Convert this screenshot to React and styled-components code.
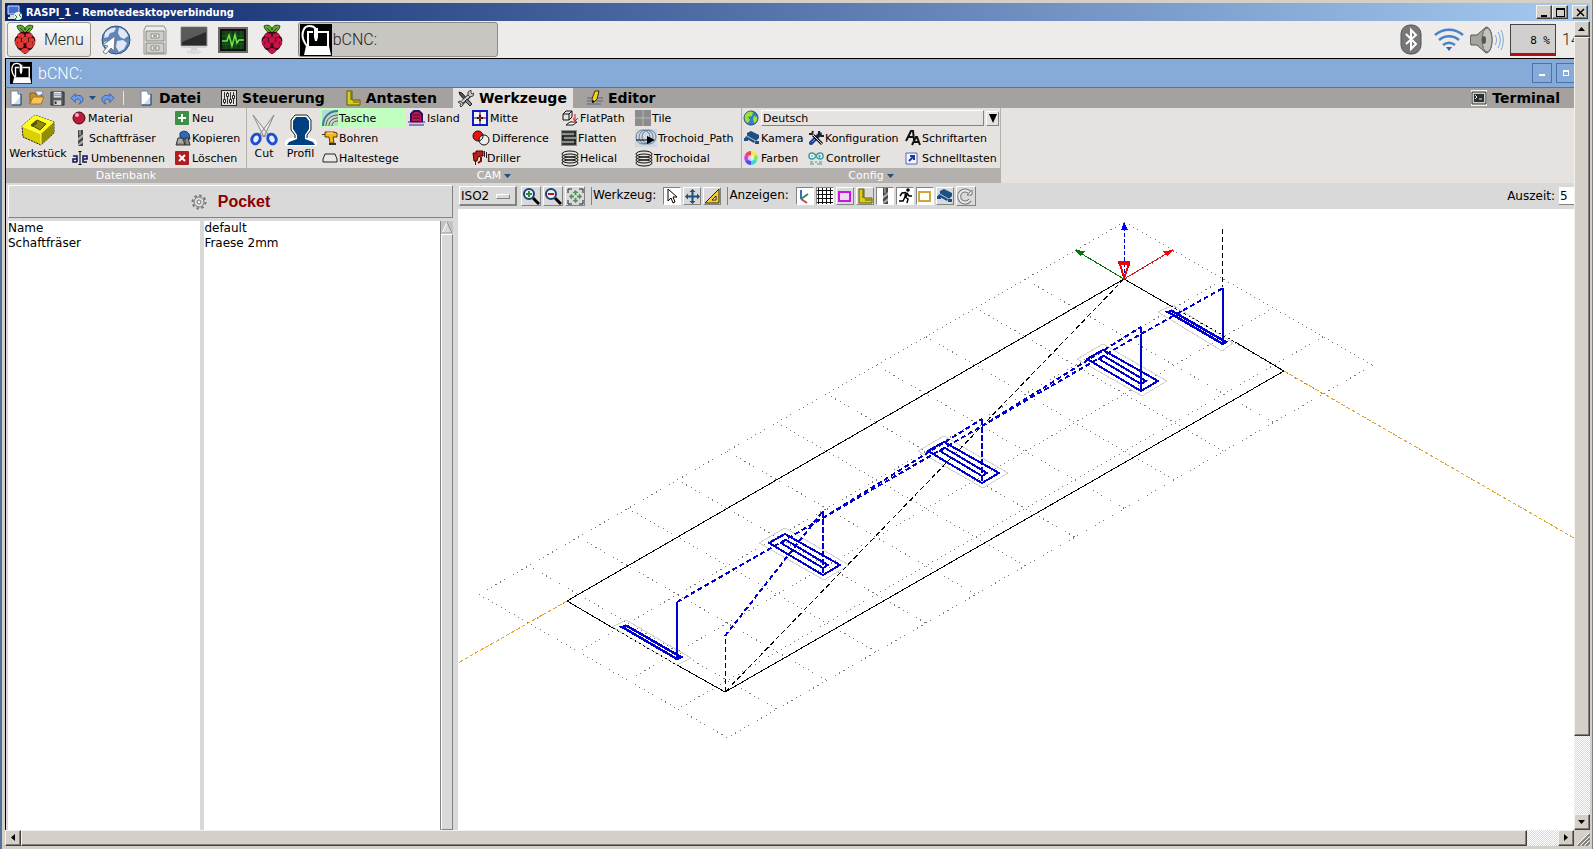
import React from 'react'
import styled, { createGlobalStyle, css } from 'styled-components'

const GlobalStyle = createGlobalStyle`
  * {
    box-sizing: border-box;
  }

  body {
    margin: 0;
    overflow: hidden;
    font-family: 'DejaVu Sans', Verdana, sans-serif;
    font-size: 11px;
    color: #000;
  }

  button, input, select {
    margin: 0;
    padding: 0;
    border: 0;
    border-radius: 0;
    background: none;
    font: inherit;
    color: inherit;
  }

  svg {
    display: block;
    flex: none;
  }
`

/* ---------- icons ---------- */

const berry = fill => (
  <>
    <path
      d="M12 10c-3-1-7-3-8-8 4-2 8 0 8 4 0-4 4-6 8-4-1 5-5 7-8 8z"
      fill="#63a832"
      stroke="#1d4a0e"
    />
    <path d="M12 9L7 4M12 9l5-5" stroke="#1d4a0e" />
    <path
      d="M12 8c4-1 7 1 8 4 3 2 3 6 1 9-1 4-4 5-5 6-2 2-3 3-4 3s-2-1-4-3c-1-1-4-2-5-6-2-3-2-7 1-9 1-3 4-5 8-4z"
      fill="#3a0812"
    />
    <g fill={fill}>
      <ellipse cx="8" cy="11.500" rx="3.400" ry="2.300" />
      <ellipse cx="16" cy="11.500" rx="3.400" ry="2.300" />
      <circle cx="12" cy="16" r="3.200" />
      <ellipse cx="5.500" cy="16" rx="2.700" ry="2.200" />
      <ellipse cx="18.500" cy="16" rx="2.700" ry="2.200" />
      <ellipse cx="3" cy="19" rx="1.200" ry="2.500" />
      <ellipse cx="21" cy="19" rx="1.200" ry="2.500" />
      <circle cx="7.400" cy="21" r="3.300" />
      <circle cx="16.600" cy="21" r="3.300" />
      <ellipse cx="12" cy="26.500" rx="3.800" ry="2.600" />
    </g>
  </>
)

const cnc = (
  <>
    <path d="M0 0h32v32H0z" fill="#000" />
    <path d="M6 22h23l2 9H4z" fill="#fff" />
    <path d="M8 22V8h5M18 8h10v14" fill="none" stroke="#fff" strokeWidth="2" />
    <path d="M14 4h4v9l-1 4h-2l-1-4z" fill="#fff" />
    <path d="M16 5C13 1 6 1 4 5c-3 6-1 12 3 17" fill="none" stroke="#fff" strokeWidth="2" />
  </>
)

const pageIcon = (
  <>
    <path d="M3 1h7l3 3v11H3z" fill="#fff" stroke="#6a86ae" />
    <path d="M10 1v3h3" fill="#cfdcf0" stroke="#4c6f9c" />
    <path d="M12 7v7H6z" fill="#c9d9f2" />
    <path d="M13 4v11H4" fill="none" stroke="#27405f" />
  </>
)

const camera = (
  <>
    <path d="M3 3l4-2 8 4v3l-3 3-9-5z" fill="#1c4f82" />
    <path d="M2 6l9 5-1 2-9-5z" fill="#1c4f82" />
    <path d="M0 8h4v3H0zM11 11h4v3h-4z" fill="#1c4f82" />
    <path d="M3 6l9 5" stroke="#8fb0d4" />
  </>
)

const ruler = (
  <>
    <path d="M2 1h5v9h8v5H2z" fill="#d8cc1c" stroke="#5f5a08" />
    <path d="M5 3h2M5 5h2M5 7h2M5 9h2M9 11v2M11 11v2M13 11v2" stroke="#5f5a08" />
  </>
)

const mill = (
  <>
    <path d="M6 0h5v16H6z" fill="#444" />
    <path d="M6 8l5-4v3l-5 4zM6 14l5-4v3l-5 3z" fill="#aaa" />
    <path d="M7 0h2v5H7z" fill="#888" />
  </>
)

const coil = (
  <g fill="none" stroke="#111">
    <ellipse cx="9" cy="4" rx="8" ry="3" />
    <ellipse cx="9" cy="7" rx="8" ry="3" />
    <ellipse cx="9" cy="10" rx="8" ry="3" />
    <ellipse cx="9" cy="13" rx="8" ry="3" />
  </g>
)

const tools = (
  <>
    <path d="M2 2l3 1 9 10-2 2L3 5z" fill="#555" stroke="#222" />
    <path d="M4 14L13 5" stroke="#333" strokeWidth="4" />
    <path d="M3 14L13 5" stroke="#d4d4d4" strokeWidth="2" />
    <path
      d="M11 5V2l3-2v3l1 1 2-1-1 3-3 1zM1 12l2-1 3 2v2l-2 2-1-1 1-2z"
      fill="#c8c8c8"
      stroke="#444"
    />
    <path d="M10 9l5 5-2 2-5-5z" fill="#888" stroke="#222" />
  </>
)

const magnifier = sign => (
  <>
    <path d="M11 11l6 6" stroke="#000" strokeWidth="3" />
    <circle cx="7" cy="7" r="5" fill="#eef3f8" stroke="#1c3f78" strokeWidth="2" />
    {sign}
  </>
)

const icons = {
  berryRed: [24, 31, berry('#dc3a34')],
  berry: [24, 31, berry('#c4144a')],
  cnc: [32, 32, cnc],
  globe: [
    30,
    30,
    <>
      <circle cx="15" cy="15" r="14" fill="#5f86bb" stroke="#33527f" />
      <path
        d="M4 8c3-4 7-6 11-5l-2 4-4 1-2 4-4 1zM18 3c4 0 8 4 9 8l-4 3-4-2-2-4zM16 16l6-1 4 3-3 6-5 3-3-5zM3 17l5-1 3 4-2 5c-4-1-6-5-6-8z"
        fill="#dfe9f5"
      />
      <path d="M14 11L2 20l5 1-5 6 3 2 5-6 3 3z" fill="#fff" stroke="#777" />
    </>,
  ],
  cabinet: [
    24,
    30,
    <>
      <path d="M3 1h18l2 4v24H1V5z" fill="#ececea" stroke="#8f8f89" />
      <path d="M3 6h18v10H3zM3 18h18v10H3z" fill="#cfcfca" stroke="#8a8a84" />
      <path d="M8 9h8v4H8zM8 21h8v4H8z" fill="#f5f5f2" stroke="#8a8a84" />
      <path d="M10 11h4M10 23h4" stroke="#555" />
    </>,
  ],
  monitor: [
    28,
    28,
    <>
      <path d="M1 1h26v19H1z" fill="#2b2b2b" stroke="#999" />
      <path d="M2 2h24v4L2 16z" fill="#5a5a5a" />
      <path d="M2 20h24v2H2zM11 22h6v3h-6z" fill="#d4d4d4" />
      <ellipse cx="14" cy="26" rx="8" ry="2" fill="#dcdcdc" />
    </>,
  ],
  graph: [
    30,
    26,
    <>
      <path d="M1 1h28v24H1z" fill="#111" stroke="#6a6a66" strokeWidth="2" />
      <path d="M4 4h22v18H4z" fill="#123c12" />
      <path d="M8 4v18M13 4v18M18 4v18M23 4v18M4 9h22M4 17h22" stroke="#1f5c1f" />
      <path d="M4 14h5l2-6 3 11 3-11 2 8 2-3h5" fill="none" stroke="#6ee84c" strokeWidth="1.500" />
    </>,
  ],
  bluetooth: [
    22,
    31,
    <>
      <rect x="1" y="1" width="20" height="29" rx="9" fill="#777" stroke="#555" />
      <path d="M6 10l10 10-5 5V6l5 5-10 9" fill="none" stroke="#fff" strokeWidth="2" />
    </>,
  ],
  wifi: [
    30,
    24,
    <>
      <g fill="none" stroke="#4a80c8" strokeWidth="2.500">
        <path d="M1 7c8-7 20-7 28 0" />
        <path d="M5 12c6-5 14-5 20 0" />
        <path d="M9 17c4-3 8-3 12 0" />
      </g>
      <path d="M12 19h6l-3 4z" fill="#2d66b4" />
    </>,
  ],
  volume: [
    34,
    30,
    <>
      <path d="M1 10h6l9-8c8 0 8 26 0 26l-9-8H1c-1-3-1-7 0-10z" fill="#a5a59f" stroke="#555" />
      <ellipse cx="17" cy="15" rx="5" ry="12" fill="#c4c4be" stroke="#666" />
      <ellipse cx="14" cy="15" rx="2" ry="4" fill="#555" />
      <path d="M25 10c2 3 2 7 0 10M28 7c3 5 3 11 0 16M31 5c3 6 3 14 0 20" fill="none" stroke="#7ba4dc" />
    </>,
  ],
  rdp: [
    15,
    15,
    <>
      <path d="M1 1h11v8H1z" fill="#3f6fd0" stroke="#d8e4ff" />
      <path d="M3 10h7v2H3zM1 12h8v2H1z" fill="#dcdcdc" />
      <circle cx="11" cy="11" r="4" fill="#e8f4e8" />
      <path d="M8 10l2 2-2 2M14 8l-2 2 2 2" fill="none" stroke="#2b8a2b" />
    </>,
  ],
  page: [16, 16, pageIcon],
  folder: [
    16,
    16,
    <>
      <path d="M1 14V3h5l1 2h6v3" fill="#c98f2a" stroke="#8a5c10" />
      <path d="M6 1h7l1 3-5 2z" fill="#e8f0fa" stroke="#7a8fb0" />
      <path d="M1 14l3-7h11l-3 7z" fill="#f6c65a" stroke="#a8741c" />
    </>,
  ],
  save: [
    16,
    16,
    <>
      <path d="M1 1h14v14H1z" fill="#595959" stroke="#2e2e2e" />
      <path d="M4 1h8v6H4z" fill="#e9eef5" />
      <path d="M4 3h8M4 5h8" stroke="#6a8dc0" />
      <path d="M4 10h8v5H4z" fill="#d5d5d5" />
      <path d="M5 11h2v3H5z" fill="#333" />
    </>,
  ],
  undo: [
    16,
    16,
    <path
      d="M1 8l5-5v3c4-2 8-1 9 3 0 3-2 5-5 6 2-2 3-4 1-5-1-1-3-1-5 0v3z"
      fill="#6d9be8"
      stroke="#2f5fb4"
    />,
  ],
  redo: [
    16,
    16,
    <path
      d="M15 8l-5-5v3C6 4 2 5 1 9c0 3 2 5 5 6-2-2-3-4-1-5 1-1 3-1 5 0v3z"
      fill="#6d9be8"
      stroke="#2f5fb4"
    />,
  ],
  caret: [7, 4, <path d="M0 0h7L3.500 4z" fill="#1c4f82" />],
  sliders: [
    16,
    16,
    <>
      <path d="M0 0h16v16H0z" fill="#2a2a2a" />
      <path d="M1 1h14v14H1z" fill="#e2e2e2" />
      <path d="M3.500 2v12M6.500 2v12M9.500 2v12M12.500 2v12" stroke="#333" />
      <path
        d="M2.500 9.500h2v3h-2zM5.500 3.500h2v3h-2zM8.500 9.500h2v3h-2zM11.500 5.500h2v3h-2z"
        fill="#fff"
        stroke="#222"
      />
    </>,
  ],
  ruler: [16, 16, ruler],
  tools: [17, 17, tools],
  pencil: [
    16,
    16,
    <>
      <path d="M0 8h16M0 11h16M0 14h14" stroke="#5a6280" />
      <path d="M5 9l3-8h4l-2 8-4 4z" fill="#f4d81c" stroke="#3a3000" />
      <path d="M5 13v-3l3 1z" fill="#111" />
    </>,
  ],
  terminal: [
    16,
    16,
    <>
      <path d="M0 0h16v16H0z" fill="#f2f2f2" />
      <path d="M1 2h14v12H1z" fill="#ccc" stroke="#333" />
      <path d="M3 4h10v8H3z" fill="#27322f" />
      <path d="M4 5l2 2-2 2M8 9h3" fill="none" stroke="#eee" />
    </>,
  ],
  stock: [
    34,
    32,
    <>
      <path d="M1 12L14 1l19 7v11L20 31 2 23z" fill="#ddd000" stroke="#111" strokeDasharray="2 1" />
      <path d="M1 12L14 1l19 7-13 12z" fill="#ffff20" />
      <path d="M20 20L33 8v11L20 31z" fill="#948d00" />
      <path d="M10 11l6-5 9 4-6 6z" fill="#8f8a10" stroke="#4a4600" />
      <path d="M10 11l6-5v4l-5 3z" fill="#5a5600" />
      <path d="M1 12l19 8v11" fill="none" stroke="#fff88a" />
    </>,
  ],
  ball: [
    14,
    14,
    <>
      <circle cx="7" cy="7" r="6" fill="#b81c3c" stroke="#4a0816" />
      <ellipse cx="5" cy="4" rx="2" ry="2" fill="#f6a8b4" />
    </>,
  ],
  mill: [16, 16, mill],
  rename: [
    16,
    14,
    <>
      <path d="M1 5h4v6M5 8H1v3h4M11 8h4V5h-4v6h4" fill="none" stroke="#101060" strokeWidth="1.500" />
      <path d="M8 1v12M6 0h1l1 1 1-1h1M6 14h1l1-1 1 1h1" fill="none" stroke="#000" />
    </>,
  ],
  plus: [
    14,
    14,
    <>
      <rect width="14" height="14" rx="1" fill="#3f8f46" />
      <path d="M7 3v8M3 7h8" stroke="#fff" strokeWidth="2" />
    </>,
  ],
  cross: [
    14,
    14,
    <>
      <rect width="14" height="14" rx="1" fill="#b01c20" />
      <path d="M4 4l6 6M10 4l-6 6" stroke="#fff" strokeWidth="2" />
    </>,
  ],
  clone: [
    16,
    16,
    <>
      <path d="M5 3c3-3 7-2 9 1l1 5-5 1-5-3z" fill="#2c6cb0" stroke="#123a6c" />
      <path d="M1 15l2-7h5l2 7zM10 15V8h3l2 7z" fill="#8c8c8c" stroke="#333" />
      <path d="M3 10h4M3 12h5" stroke="#ccc" />
    </>,
  ],
  scissors: [
    28,
    32,
    <>
      <path d="M3 1l15 19-4 3zM24 1L10 20l4 3z" fill="#eee" stroke="#888" />
      <ellipse cx="6" cy="25" rx="4" ry="5" fill="#e8ecf8" stroke="#1f4fd0" strokeWidth="3" transform="rotate(25 6 25)" />
      <ellipse cx="22" cy="25" rx="4" ry="5" fill="#e8ecf8" stroke="#1f4fd0" strokeWidth="3" transform="rotate(-25 22 25)" />
    </>,
  ],
  profile: [
    32,
    32,
    <>
      <path
        d="M10 2h11l4 5v8l-4 6v3l8 3 2 4H1l2-4 8-3v-3l-4-6V7z"
        fill="#004080"
        stroke="#fff"
        strokeWidth="4"
      />
      <path d="M10 1h12l4 5v10l-4 5v3" fill="none" stroke="#111" />
      <path d="M10 1L6 6v10l4 5v3" fill="none" stroke="#111" />
      <path d="M11 3h10l3 4v8l-4 6v4l8 3 2 3H2l2-3 8-3v-4l-4-6V7z" fill="#004080" />
    </>,
  ],
  pocket: [
    16,
    16,
    <>
      <path d="M0 0h16v16H0z" fill="#b8dccf" />
      <g fill="none">
        <path d="M1 16C1 7 7 1 16 1" stroke="#2d7f9c" strokeWidth="2" />
        <path d="M4 16C4 9 9 5 16 5" stroke="#7a4a28" />
        <path d="M7 16c0-5 4-8 9-8" stroke="#8f3c20" />
        <path d="M10 16c0-3 2-5 6-5" stroke="#8f3c20" />
      </g>
    </>,
  ],
  drill: [
    16,
    16,
    <>
      <path d="M3 2h9l3 1v4h-4l1 6H8L7 7H3z" fill="#f4b81c" stroke="#5a3c00" />
      <path d="M0 4h3v1H0zM7 13h7v2H7z" fill="#333" />
      <path d="M5 3h6" stroke="#fff0a0" />
    </>,
  ],
  tabs: [16, 12, <path d="M3 2h10l2 5v3H1V7z" fill="#e8e8e8" stroke="#222" />],
  island: [
    17,
    16,
    <>
      <path d="M3 4l3-3h5l3 3v8H3z" fill="#c01840" stroke="#1c1470" strokeWidth="2" />
      <path d="M5 5h7M5 8h7" stroke="#1c1470" />
      <path d="M0 12h17M1 15h15" stroke="#2020a0" />
      <path d="M1 13h15" stroke="#e8a0a0" />
    </>,
  ],
  center: [
    16,
    16,
    <>
      <path d="M1 1h14v14H1z" fill="#f4f4f4" stroke="#1018c8" strokeWidth="2" />
      <path d="M8 2v12M2 8h12" stroke="#111" strokeDasharray="5 2" />
      <path d="M5 8h6M8 5v6" stroke="#111" strokeWidth="2" />
      <circle cx="8" cy="8" r="1.500" fill="#d01818" />
    </>,
  ],
  difference: [
    18,
    16,
    <>
      <circle cx="6" cy="6" r="5" fill="#f01010" />
      <circle cx="12" cy="10" r="5" fill="#eee" stroke="#111" />
      <circle cx="6" cy="6" r="5" fill="none" stroke="#111" />
    </>,
  ],
  driller: [
    15,
    16,
    <>
      <path d="M1 3h3V1h7v5H9l-3 1-1 4H2z" fill="#b82014" stroke="#400" />
      <path d="M12 1h1v6h-1zM14 2h1v6h-1zM3 11h1v4H3z" fill="#222" />
      <path d="M9 7v4l-3 2" fill="none" stroke="#801010" strokeWidth="2" />
    </>,
  ],
  flatpath: [
    18,
    16,
    <>
      <path d="M2 4l3-3h6v6l-3 3H2zM2 4h6v6M8 4l3-3" fill="none" stroke="#111" />
      <path d="M14 4v6M12 8l2 3 3-3" fill="none" stroke="#e01010" />
      <path d="M5 15l4-3h7l-4 3z" fill="#fff" stroke="#111" />
    </>,
  ],
  flatten: [
    16,
    16,
    <>
      <path d="M0 0h16v16H0z" fill="#8a908a" />
      <path d="M1 2h14M1 6h14M1 10h14M1 14h14M14 2v4M2 6v4M14 10v4" stroke="#161a16" strokeWidth="1.500" />
    </>,
  ],
  coil: [18, 17, coil],
  tile: [
    16,
    16,
    <>
      <path d="M0 0h16v16H0z" fill="#8c8c8c" />
      <path d="M8 0v16M0 8h16" stroke="#b8b8b8" />
    </>,
  ],
  trochoid: [
    22,
    18,
    <>
      <path d="M0 0h22v18H0z" fill="#d3d8de" />
      <g fill="none" stroke="#5c80a4">
        <circle cx="8" cy="8" r="7" />
        <circle cx="11" cy="8" r="7" />
        <circle cx="14" cy="8" r="7" />
      </g>
      <path d="M1 11h13" stroke="#000" />
      <path d="M12 7l8 4-8 4z" fill="#000" />
    </>,
  ],
  earth: [
    16,
    16,
    <>
      <circle cx="8" cy="8" r="7" fill="#2f7fd4" stroke="#1c4a80" />
      <path d="M2 5c2-4 6-4 8-3l-1 4-4 1 2 3-2 3C2 12 1 9 2 5zM11 6l3 1c1 3-1 6-3 6l-1-4z" fill="#9ee02c" />
    </>,
  ],
  camera: [16, 16, camera],
  config: [
    16,
    16,
    <>
      <path d="M3 13L12 4" stroke="#1c3f9c" strokeWidth="4" strokeLinecap="round" />
      <path d="M4 12l4-4" stroke="#7c9ae0" />
      <path d="M9 7l3-3M11 1v3l2 2h3" fill="none" stroke="#222" strokeWidth="2" />
      <path d="M5 5l9 9" stroke="#111" strokeWidth="3" />
      <path d="M5 5l9 9" stroke="#ddd" />
      <path d="M1 4h3l1-3" fill="none" stroke="#222" strokeWidth="2" />
    </>,
  ],
  fonts: [
    16,
    16,
    <>
      <path d="M1 11L6 1h2l1 9M3 7h5" fill="none" stroke="#111" strokeWidth="2" />
      <path d="M7 15l4-8h1l3 8M9 12h5" fill="none" stroke="#111" strokeWidth="2" />
    </>,
  ],
  colors: [
    14,
    14,
    <>
      <path d="M7 7V0a7 7 0 0 1 6 4z" fill="#f6e84a" />
      <path d="M7 7l6-3a7 7 0 0 1 0 6z" fill="#7bea5c" />
      <path d="M7 7l6 3a7 7 0 0 1-6 4z" fill="#38d8d8" />
      <path d="M7 7v7a7 7 0 0 1-6-4z" fill="#4a50f0" />
      <path d="M7 7l-6 3a7 7 0 0 1 0-6z" fill="#c83cf0" />
      <path d="M7 7L1 4a7 7 0 0 1 6-4z" fill="#f04848" />
      <circle cx="7" cy="7" r="3" fill="#fff" opacity="0.700" />
    </>,
  ],
  controller: [
    16,
    14,
    <>
      <path
        d="M8 5C6 1 1 1 1 5s5 4 7 0c2-4 7-4 7 0s-5 4-7 0z"
        fill="#fff"
        stroke="#3a9ca4"
        strokeWidth="1.500"
      />
      <path d="M3 5h2M10 5h3M11.500 4v3M2 11h3M7 11h2M11 11h3M2 13h4M9 13h5" stroke="#3a9ca4" />
    </>,
  ],
  shortcut: [
    13,
    13,
    <>
      <path d="M1 1h11v11H1z" fill="#f4f6ff" stroke="#5068c0" />
      <path d="M4 9l4-4M5 4h4v4" fill="none" stroke="#1c3c90" strokeWidth="2" />
    </>,
  ],
  gear: [
    16,
    16,
    <>
      <circle cx="8" cy="8" r="6.500" fill="none" stroke="#777" strokeWidth="2" strokeDasharray="2.500 2.500" />
      <circle cx="8" cy="8" r="5" fill="#dcdcd8" stroke="#777" />
      <circle cx="8" cy="8" r="2" fill="#eee" stroke="#777" />
    </>,
  ],
  zoomIn: [18, 18, magnifier(<path d="M7 4v6M4 7h6" stroke="#2c8a3c" strokeWidth="2" />)],
  zoomOut: [18, 18, magnifier(<path d="M4 7h6" stroke="#b02020" strokeWidth="2" />)],
  zoomFit: [
    17,
    17,
    <>
      <path d="M1 5V1h4M12 1h4v4M16 12v4h-4M5 16H1v-4" fill="none" stroke="#222" />
      <path
        d="M8.500 2l3 3h-2v2h-2V5h-2zM8.500 15l3-3h-2v-2h-2v2h-2zM2 8.500l3-3v2h2v2H5v2zM15 8.500l-3-3v2h-2v2h2v2z"
        fill="#4a9a58"
      />
    </>,
  ],
  pointer: [16, 16, <path d="M4 1v12l3-3 2 5 2-1-2-5h4z" fill="#fff" stroke="#000" />],
  move: [
    15,
    15,
    <path
      d="M7.500 0l3 3h-2v3.500h3.500v-2l3 3-3 3v-2H8.500V12h2l-3 3-3-3h2V8.500H3v2l-3-3 3-3v2h3.500V3h-2z"
      fill="#1c4f82"
    />,
  ],
  triangle: [
    16,
    16,
    <>
      <path d="M1 15L15 1v14z" fill="#f4cc30" stroke="#222" />
      <path d="M8 12l4-4v4z" fill="#fff" stroke="#222" />
    </>,
  ],
  axes: [
    15,
    15,
    <>
      <path d="M4 1v9" stroke="#3c6ca8" strokeWidth="2" />
      <path d="M4 10l7-5" stroke="#2c8a6c" strokeWidth="2" />
      <path d="M4 10l6 4" stroke="#c04848" strokeWidth="2" />
    </>,
  ],
  grid: [
    17,
    17,
    <path
      d="M0 2.500h17M0 6.500h17M0 10.500h17M0 14.500h17M2.500 0v17M6.500 0v17M10.500 0v17M14.500 0v17"
      stroke="#111"
    />,
  ],
  margin: [13, 13, <path d="M1 2h11v9H1z" fill="#e8e0e8" stroke="#d010e8" strokeWidth="2" />],
  runner: [
    16,
    16,
    <>
      <circle cx="11" cy="2" r="1.800" fill="#000" />
      <path d="M8 4l3 1-1 4-3 1z" fill="#000" />
      <path
        d="M9 4.500L5 5 3 8M10 5l2 3h3M8 9l3 2-1 4M8 9l-2 4H2"
        fill="none"
        stroke="#000"
        strokeWidth="1.500"
      />
    </>,
  ],
  workarea: [13, 13, <path d="M1 2h11v9H1z" fill="#fff" stroke="#d0a838" strokeWidth="2" />],
  refresh: [
    17,
    17,
    <>
      <path d="M13 12a6 6 0 1 1 0-7" fill="none" stroke="#777" strokeWidth="4" />
      <path d="M13 12a6 6 0 1 1 0-7" fill="none" stroke="#ececec" strokeWidth="2" />
      <path d="M10 7h5V2z" fill="#ececec" stroke="#777" />
    </>,
  ],
  up: [8, 4, <path d="M0 4h7L3.500 0z" />],
  down: [8, 4, <path d="M0 0h7L3.500 4z" />],
  left: [4, 8, <path d="M4 0v7L0 3.500z" />],
  right: [4, 8, <path d="M0 0v7l4-3.500z" />],
  drop: [8, 9, <path d="M0 0h8L4 9z" />],
  winMin: [9, 9, <path d="M1 7h6v2H1z" />],
  winMax: [9, 9, <path d="M0 0h9v9H0zM1 2v6h7V2z" fillRule="evenodd" />],
  winClose: [9, 9, <path d="M1 1l7 7M8 1L1 8" stroke="#000" strokeWidth="1.500" />],
  bMin: [6, 6, <path d="M0 4h6v2H0z" fill="#fff" />],
  bMax: [6, 6, <path d="M0 0h6v6H0zM1 2v3h4V2z" fill="#fff" fillRule="evenodd" />],
  grip: [
    14,
    14,
    <>
      <path d="M2 14L14 2M6 14l8-8M10 14l4-4" stroke="#808080" strokeWidth="2" />
      <path d="M1 13L13 1M5 13l8-8M9 13l4-4" stroke="#fff" />
    </>,
  ],
  treeUp: [
    10,
    11,
    <>
      <path d="M5 0L0 11h10z" fill="#d9d9d9" stroke="#fff" />
      <path d="M5 0l5 11H0" fill="none" stroke="#828282" />
    </>,
  ],
}

const Icon = ({ name, size }) => {
  const [w, h, body] = icons[name]
  const scale = size ? size / w : 1
  return (
    <svg width={w * scale} height={h * scale} viewBox={`0 0 ${w} ${h}`} aria-hidden="true">
      {body}
    </svg>
  )
}

/* ---------- remote desktop frame ---------- */

const raised = css`
  border: 1px solid;
  border-color: #fff #828282 #828282 #fff;
`

const winRaised = css`
  background: #d4d0c8;
  border: 1px solid;
  border-color: #f4f2ee #404040 #404040 #f4f2ee;
  box-shadow: inset -1px -1px 0 #808080;
`

const Frame = styled.div`
  height: 100vh;
  display: flex;
  flex-direction: column;
  padding: 3px 2px 3px 3px;
  background: #d4d0c8;
  border-left: 2px solid #54709c;
  border-right: 1px solid #808080;
`

const TitleBar = styled.header`
  display: flex;
  align-items: center;
  gap: 4px;
  height: 18px;
  flex: none;
  padding: 0 2px;
  background: linear-gradient(to right, #0a246a, #a6caf0);
  color: #fff;
  font-family: 'DejaVu Sans Condensed', 'DejaVu Sans', sans-serif;
  font-size: 11px;
  font-weight: bold;

  span {
    flex: 1;
  }
`

const WinButton = styled.button`
  ${winRaised}
  width: 16px;
  height: 14px;
  display: flex;
  align-items: center;
  justify-content: center;

  & + & {
    margin-left: -4px;
  }

  &:last-child {
    margin-left: 0;
  }
`

const Viewport = styled.div`
  flex: 1;
  min-height: 0;
  display: grid;
  grid-template-columns: minmax(0, 1fr) 16px;
  grid-template-rows: minmax(0, 1fr) 16px;
`

const Scrollbar = styled.div`
  display: flex;
  flex-direction: ${({ vertical }) => (vertical ? 'column' : 'row')};
  background: repeating-conic-gradient(#fff 0 25%, #dcd9d2 0 50%) 0 0 / 2px 2px;
`

const ScrollArrow = styled.button`
  ${winRaised}
  width: 16px;
  height: 16px;
  flex: none;
  display: flex;
  align-items: center;
  justify-content: center;
`

const Track = styled.div`
  flex: 1;
  display: flex;
  flex-direction: inherit;
`

const Thumb = styled.div`
  ${winRaised}
  flex: 0 0 ${({ size }) => size};
`

const Corner = styled.div`
  background: #d4d0c8;
  display: flex;
  align-items: flex-end;
  justify-content: flex-end;
`

const Desktop = styled.div`
  display: flex;
  flex-direction: column;
  overflow: hidden;
  background: #d9d9d9;
`

/* ---------- panel of the remote desktop ---------- */

const Taskbar = styled.nav`
  height: 38px;
  flex: none;
  display: flex;
  align-items: center;
  padding-left: 2px;
  background: #edecea;
  border-bottom: 1px solid #000;
  font-family: Roboto, sans-serif;
  font-size: 16px;
  font-weight: 300;
  color: #222;
`

const MenuButton = styled.button`
  display: flex;
  align-items: center;
  gap: 7px;
  height: 35px;
  padding: 0 6px 0 5px;
  border: 1px solid #9a9792;
  border-radius: 3px;
  background: linear-gradient(#fafafa, #e4e2df);
`

const Launcher = styled.button`
  width: 39px;
  height: 35px;
  display: flex;
  align-items: center;
  justify-content: center;
`

const Launchers = styled.div`
  display: flex;
  margin: 0 6px;
`

const TaskButton = styled.button`
  display: flex;
  align-items: center;
  gap: 1px;
  width: 200px;
  height: 35px;
  padding: 0 1px;
  border: 1px solid #8d8a85;
  border-radius: 3px;
  background: #c8c6c1;
`

const Tray = styled.div`
  margin-left: auto;
  display: flex;
  align-items: center;
  gap: 6px;

  svg:first-child {
    margin-right: 6px;
  }
`

const Cpu = styled.div`
  width: 46px;
  height: 32px;
  padding-right: 5px;
  border: 1px solid #444;
  border-bottom: 3px solid #b01018;
  background: #d2d0ce;
  font-family: 'DejaVu Sans Mono', monospace;
  font-size: 11px;
  font-weight: normal;
  line-height: 31px;
  text-align: right;
  color: #000;
`

/* the panel runs on past the right edge of the viewport */
const Clock = styled.div`
  width: 12px;
  overflow: hidden;
  white-space: nowrap;
`

const AppTitle = styled.div`
  height: 29px;
  flex: none;
  display: flex;
  align-items: center;
  gap: 6px;
  padding-left: 4px;
  background: #86abd9;
  border-left: 1px solid #000;
  border-bottom: 1px solid #4a78b4;
  font-family: Roboto, sans-serif;
  font-size: 16px;
  font-weight: 300;
  color: #fff;

  span {
    flex: 1;
  }
`

const AppButton = styled.button`
  width: 20px;
  height: 20px;
  display: flex;
  align-items: center;
  justify-content: center;
  border: 1px solid #4a72a8;

  &:last-child {
    width: 18px;
    margin-left: -2px;
    border-right: 0;
  }
`

const AppBody = styled.div`
  flex: 1;
  min-height: 0;
  display: flex;
  flex-direction: column;
  border-left: 1px solid #000;
`

/* ---------- ribbon ---------- */

const TabBar = styled.div`
  height: 20px;
  flex: none;
  display: flex;
  background: #a5a19e;
`

const QuickAccess = styled.div`
  display: flex;
  align-items: center;
  gap: 5px;
  width: 118px;
  margin: 3px 0;
  padding-left: 2px;
  border-right: 1px solid #e9e7e4;
`

const QuickButton = styled.button`
  display: flex;
  align-items: center;
`

const Tab = styled.button`
  display: flex;
  align-items: center;
  gap: 5px;
  padding: 0 6px 0 4px;
  margin-left: ${({ push }) => (push ? 'auto' : '10px')};
  margin-right: ${({ push }) => (push ? '8px' : 0)};
  background: ${({ active }) => (active ? '#e5e2df' : 'transparent')};
  font-size: 14px;
  font-weight: bold;
`

const Ribbon = styled.div`
  height: 75px;
  flex: none;
  display: flex;
  background: #e5e2df;
`

const Group = styled.section`
  display: flex;
  flex-direction: column;
  border-right: 1px solid #b3b0ad;
`

const GroupBody = styled.div`
  display: grid;
  grid-template-columns: ${({ cols }) => cols};
  height: 60px;
`

const GroupLabel = styled.div`
  display: flex;
  align-items: center;
  justify-content: center;
  gap: 3px;
  height: 15px;
  background: #b3b0ad;
  color: #fff;
`

const Stack = styled.div`
  display: grid;
  grid-template-rows: repeat(3, 20px);
`

const ToolButton = styled.button`
  display: flex;
  align-items: center;
  gap: ${({ gap = 1 }) => gap}px;
  padding-left: 2px;
  background: ${({ active }) => (active ? '#c0ffc0' : 'transparent')};
  white-space: nowrap;
`

const BigButton = styled.button`
  display: flex;
  flex-direction: column;
  align-items: center;
  gap: 1px;
  padding-top: 6px;
`

const Language = styled.div`
  grid-column: 1 / -1;
  display: flex;
  align-items: center;
  gap: 2px;
  padding: 0 1px;

  select {
    appearance: none;
    flex: 1;
    height: 16px;
    padding-left: 1px;
    ${raised}
  }

  button {
    width: 13px;
    height: 15px;
    display: flex;
    align-items: center;
    justify-content: center;
    ${raised}
  }
`

const ConfigBody = styled.div`
  display: grid;
  grid-template-columns: 64px 97px 97px;
  grid-template-rows: repeat(3, 20px);
`

/* ---------- work area ---------- */

const Work = styled.main`
  flex: 1;
  min-height: 0;
  display: flex;
`

const Side = styled.aside`
  width: 447px;
  flex: none;
  display: flex;
  flex-direction: column;
  gap: 3px;
  padding: 2px 0 0 2px;
`

const SideTitle = styled.button`
  height: 33px;
  flex: none;
  display: flex;
  align-items: center;
  justify-content: center;
  gap: 11px;
  ${raised}
  font-family: 'Liberation Sans', Arial, sans-serif;
  font-size: 16px;
  font-weight: bold;
  color: #8b0000;
`

const ListArea = styled.div`
  flex: 1;
  min-height: 0;
  display: flex;
`

const List = styled.table`
  flex: 1;
  height: 100%;
  border-collapse: collapse;
  table-layout: fixed;
  background: #fff;
  font-size: 12px;
  line-height: 15px;

  td {
    padding: 0 1px 0 0;
    vertical-align: top;
  }

  td:first-child {
    width: 45%;
    border-right: 4px solid #d9d9d9;
  }
`

const ListScroll = styled.div`
  width: 13px;
  display: flex;
  flex-direction: column;
  background: #c3c3c3;
  border-left: 1px solid #828282;

  button {
    height: 13px;
    display: flex;
    align-items: center;
    justify-content: center;
  }

  div {
    flex: 1;
    background: #d9d9d9;
    ${raised}
  }
`

const View = styled.section`
  flex: 1;
  min-width: 0;
  display: flex;
  flex-direction: column;
  padding-left: 5px;
`

const Toolbar = styled.div`
  height: 26px;
  flex: none;
  display: flex;
  align-items: center;
  gap: 2px;
  padding-left: 1px;
  font-size: 12px;
`

const Projection = styled.label`
  position: relative;
  display: flex;
  margin-right: 2px;

  select {
    appearance: none;
    width: 58px;
    height: 20px;
    padding-left: 1px;
    ${raised}
    border-width: 1px 2px 2px 1px;
  }

  span {
    position: absolute;
    right: 7px;
    top: 8px;
    width: 14px;
    height: 5px;
    ${raised}
  }
`

const IconButton = styled.button`
  width: ${({ wide }) => (wide ? 20 : 18)}px;
  height: ${({ wide }) => (wide ? 20 : 18)}px;
  display: flex;
  align-items: center;
  justify-content: center;
  overflow: hidden;
  ${raised}
  ${({ active }) => active && 'background: #fff; border-color: #828282 #fff #fff #828282;'}
`

const BarLabel = styled.span`
  height: 18px;
  margin-left: 4px;
  margin-right: 5px;
  padding-left: 1px;
  border-left: 1px solid #828282;
  line-height: 16px;
`

const Timeout = styled.label`
  margin-left: auto;
  display: flex;
  align-items: center;
  gap: 4px;

  input {
    width: 15px;
    height: 18px;
    padding-left: 1px;
    background: #fff;
    border-bottom: 1px solid #828282;
  }
`

const Plot = styled.div`
  flex: 1;
  min-height: 0;
  overflow: hidden;
  background: #fff;
`

/* Isometric cell of the plot grid */
const CELL_X = 49.65
const CELL_Y = 28.65
const APEX = [1124.5, 222]

const iso = (u, v) => [APEX[0] + (u - v) * CELL_X, APEX[1] + (u + v) * CELL_Y]

const Segment = ({ from, to, ...rest }) => (
  <line x1={from[0]} y1={from[1]} x2={to[0]} y2={to[1]} {...rest} />
)

const range = n => Array.from({ length: n + 1 }, (_, i) => i)

const pocketOffsets = [
  [0, 0],
  [159, -92],
  [318, -184],
]

const Toolpath = () => (
  <svg width="1116" height="620" viewBox="458 209 1116 620" shapeRendering="crispEdges" fill="none">
    <g stroke="#777" strokeDasharray="1 4">
      {range(5).map(u => (
        <Segment key={u} from={iso(u, 0)} to={iso(u, 13)} />
      ))}
      {range(13).map(v => (
        <Segment key={v} from={iso(0, v)} to={iso(5, v)} />
      ))}
    </g>

    <g stroke="#dca52c" strokeDasharray="4 2">
      <path d="M1284 371l290 167M567 601l-109 62" />
    </g>

    <g stroke="#d0d0d0">
      <path d="M1158 312l15-7 60 38-11 8zM612 627l14-7 65 38-14 7z" />
      {pocketOffsets.map(([x, y]) => (
        <path key={x} d="M759 543l26-15 64 37-25 15z" transform={`translate(${x} ${y})`} />
      ))}
    </g>

    <g stroke="#000">
      <path d="M1124 279L567 601l46 27M677 665l48 27 559-321-49-29M1124 279l47 27" />
      <path d="M613 628l64 37M1171 306l64 36" strokeDasharray="2 3" />
      <path d="M1124 279L725 692M725 692v-56M1222 229v58" strokeDasharray="5 3" />
    </g>

    <g stroke="#0000cd" strokeWidth="2">
      <path d="M677 602v56M1141 334v57M1223 288v55" />
      <path
        d="M677 602l146-84 159-92 159-92 82-46M823 518l159-99M982 426l159-99M725 636l98-125"
        strokeDasharray="5 3"
      />
      <path d="M823 511v63M982 419v63M1141 327v10" strokeDasharray="6 2" />
      {pocketOffsets.map(([x, y]) => (
        <g key={x} transform={`translate(${x} ${y})`}>
          <path d="M769 543l16-9 55 31-17 10z" />
          <path d="M781 543l5-3 42 25-5 3z" />
        </g>
      ))}
      <path d="M1168 312l4-1 54 31-3 2zM622 627l5-1 54 31-4 2z" strokeWidth="2.500" />
    </g>

    <g>
      <path d="M1124 279v-50" stroke="#0000cd" strokeDasharray="4 2" />
      <path d="M1124 222l4 8h-7z" fill="#0000ff" />
      <path d="M1124 279l-42-25" stroke="#007000" />
      <path d="M1074 250l11 1-4 5z" fill="#007a00" />
      <path d="M1124 279l42-25" stroke="#c02020" />
      <path d="M1174 250l-11 1 4 5z" fill="#ff0000" />
      <path d="M1120 264h9l-5 14zM1119 264v-2h10v2" stroke="#f00000" strokeWidth="2" />
    </g>
  </svg>
)

const datenbank = [
  [['ball', 'Material', 2], ['mill', 'Schaftfräser'], ['rename', 'Umbenennen', 3]],
  [['plus', 'Neu', 3], ['clone', 'Kopieren'], ['cross', 'Löschen', 3]],
]

const cam = [
  [['pocket', 'Tasche', 1, true], ['drill', 'Bohren'], ['tabs', 'Haltestege']],
  [['island', 'Island', 2]],
  [['center', 'Mitte', 2], ['difference', 'Difference', 2], ['driller', 'Driller', 0]],
  [['flatpath', 'FlatPath'], ['flatten', 'Flatten'], ['coil', 'Helical']],
  [['tile', 'Tile'], ['trochoid', 'Trochoid_Path'], ['coil', 'Trochoidal']],
]

const config = [
  ['camera', 'Kamera'],
  ['config', 'Konfiguration'],
  ['fonts', 'Schriftarten'],
  ['colors', 'Farben', 3],
  ['controller', 'Controller', 2],
  ['shortcut', 'Schnelltasten', 4],
]

const display = [
  ['axes', 'Achsen', true],
  ['grid', 'Raster', true],
  ['margin', 'Rand'],
  ['ruler', 'Lineal'],
  ['mill', 'Pfad', true],
  ['runner', 'Eilgang', true],
  ['workarea', 'Arbeitsbereich', true],
  ['camera', 'Kamera'],
]

const Tool = ({ item: [icon, label, gap, active] }) => (
  <ToolButton gap={gap} active={active}>
    <Icon name={icon} />
    {label}
  </ToolButton>
)

const Stacks = ({ columns }) =>
  columns.map(items => (
    <Stack key={items[0][1]}>
      {items.map(item => (
        <Tool key={item[1]} item={item} />
      ))}
    </Stack>
  ))

const App = () => (
  <>
    <GlobalStyle />
    <Frame>
      <TitleBar>
        <Icon name="rdp" />
        <span>RASPI_1 - Remotedesktopverbindung</span>
        <WinButton aria-label="Minimieren"><Icon name="winMin" /></WinButton>
        <WinButton aria-label="Maximieren"><Icon name="winMax" /></WinButton>
        <WinButton aria-label="Schließen"><Icon name="winClose" /></WinButton>
      </TitleBar>
      <Viewport>
        <Desktop>
          <Taskbar>
            <MenuButton>
              <Icon name="berryRed" />
              Menu
            </MenuButton>
            <Launchers>
              <Launcher aria-label="Browser"><Icon name="globe" /></Launcher>
              <Launcher aria-label="Dateien"><Icon name="cabinet" /></Launcher>
              <Launcher aria-label="Desktop"><Icon name="monitor" /></Launcher>
              <Launcher aria-label="Monitor"><Icon name="graph" /></Launcher>
              <Launcher aria-label="Raspberry Pi"><Icon name="berry" /></Launcher>
            </Launchers>
            <TaskButton>
              <Icon name="cnc" />
              bCNC:
            </TaskButton>
            <Tray>
              <Icon name="bluetooth" />
              <Icon name="wifi" />
              <Icon name="volume" />
              <Cpu>8 %</Cpu>
              <Clock>14</Clock>
            </Tray>
          </Taskbar>
          <AppTitle>
            <Icon name="cnc" size={22} />
            <span>bCNC:</span>
            <AppButton aria-label="Minimieren"><Icon name="bMin" /></AppButton>
            <AppButton aria-label="Maximieren"><Icon name="bMax" /></AppButton>
          </AppTitle>
          <AppBody>
            <TabBar>
              <QuickAccess>
                <QuickButton aria-label="Neu"><Icon name="page" /></QuickButton>
                <QuickButton aria-label="Öffnen"><Icon name="folder" /></QuickButton>
                <QuickButton aria-label="Speichern"><Icon name="save" size={15} /></QuickButton>
                <QuickButton aria-label="Rückgängig"><Icon name="undo" size={14} /></QuickButton>
                <QuickButton aria-label="Verlauf"><Icon name="caret" /></QuickButton>
                <QuickButton aria-label="Wiederholen"><Icon name="redo" size={14} /></QuickButton>
              </QuickAccess>
              <Tab><Icon name="page" />Datei</Tab>
              <Tab><Icon name="sliders" />Steuerung</Tab>
              <Tab><Icon name="ruler" />Antasten</Tab>
              <Tab active><Icon name="tools" />Werkzeuge</Tab>
              <Tab><Icon name="pencil" />Editor</Tab>
              <Tab push><Icon name="terminal" />Terminal</Tab>
            </TabBar>
            <Ribbon>
              <Group>
                <GroupBody cols="64px 103px 73px">
                  <BigButton><Icon name="stock" />Werkstück</BigButton>
                  <Stacks columns={datenbank} />
                </GroupBody>
                <GroupLabel>Datenbank</GroupLabel>
              </Group>
              <Group>
                <GroupBody cols="34px 39px 86px 64px 89px 74px 108px">
                  <BigButton><Icon name="scissors" />Cut</BigButton>
                  <BigButton><Icon name="profile" />Profil</BigButton>
                  <Stacks columns={cam} />
                </GroupBody>
                <GroupLabel>CAM<Icon name="caret" /></GroupLabel>
              </Group>
              <Group>
                <ConfigBody>
                  <Language>
                    <Icon name="earth" />
                    <select aria-label="Sprache">
                      <option>Deutsch</option>
                    </select>
                    <button aria-label="Sprache öffnen"><Icon name="drop" /></button>
                  </Language>
                  {config.map(item => (
                    <Tool key={item[1]} item={item} />
                  ))}
                </ConfigBody>
                <GroupLabel>Config<Icon name="caret" /></GroupLabel>
              </Group>
            </Ribbon>
            <Work>
              <Side>
                <SideTitle><Icon name="gear" />Pocket</SideTitle>
                <ListArea>
                  <List>
                    <tbody>
                      <tr><td height="15">Name</td><td>default</td></tr>
                      <tr><td height="15">Schaftfräser</td><td>Fraese 2mm</td></tr>
                      <tr><td /><td /></tr>
                    </tbody>
                  </List>
                  <ListScroll>
                    <button aria-label="Nach oben"><Icon name="treeUp" /></button>
                    <div />
                  </ListScroll>
                </ListArea>
              </Side>
              <View>
                <Toolbar>
                  <Projection>
                    <select aria-label="Ansicht">
                      <option>ISO2</option>
                    </select>
                    <span />
                  </Projection>
                  <IconButton wide aria-label="Vergrößern"><Icon name="zoomIn" /></IconButton>
                  <IconButton wide aria-label="Verkleinern"><Icon name="zoomOut" /></IconButton>
                  <IconButton wide aria-label="Einpassen"><Icon name="zoomFit" /></IconButton>
                  <BarLabel>Werkzeug:</BarLabel>
                  <IconButton active aria-label="Auswahl"><Icon name="pointer" /></IconButton>
                  <IconButton aria-label="Verschieben"><Icon name="move" /></IconButton>
                  <IconButton aria-label="Messen"><Icon name="triangle" /></IconButton>
                  <BarLabel>Anzeigen:</BarLabel>
                  {display.map(([icon, label, active]) => (
                    <IconButton key={label} active={active} aria-label={label}>
                      <Icon name={icon} />
                    </IconButton>
                  ))}
                  <IconButton wide aria-label="Neu zeichnen"><Icon name="refresh" /></IconButton>
                  <Timeout>
                    Auszeit:
                    <input defaultValue="5" />
                  </Timeout>
                </Toolbar>
                <Plot>
                  <Toolpath />
                </Plot>
              </View>
            </Work>
          </AppBody>
        </Desktop>
        <Scrollbar vertical>
          <ScrollArrow aria-label="Hoch"><Icon name="up" /></ScrollArrow>
          <Track><Thumb size="90%" /></Track>
          <ScrollArrow aria-label="Runter"><Icon name="down" /></ScrollArrow>
        </Scrollbar>
        <Scrollbar>
          <ScrollArrow aria-label="Links"><Icon name="left" /></ScrollArrow>
          <Track><Thumb size="98%" /></Track>
          <ScrollArrow aria-label="Rechts"><Icon name="right" /></ScrollArrow>
        </Scrollbar>
        <Corner><Icon name="grip" /></Corner>
      </Viewport>
    </Frame>
  </>
)

export default App
